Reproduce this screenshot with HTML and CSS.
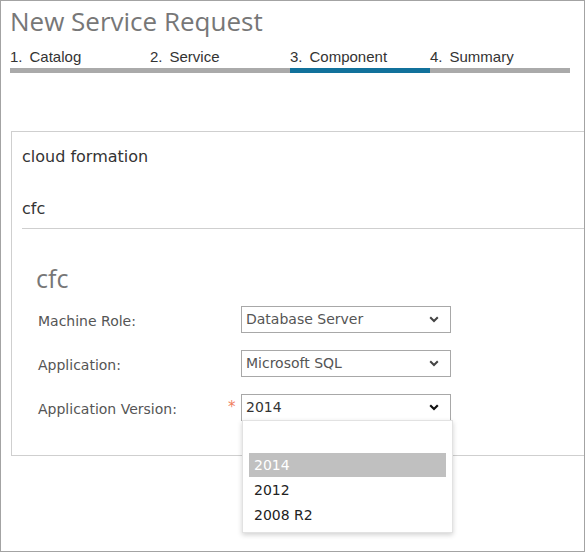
FILE: index.html
```html
<!DOCTYPE html>
<html>
<head>
<meta charset="utf-8">
<link rel="stylesheet" href="styles.css">
</head>
<body>
<div class="frame">
  <h1 class="title">New Service Request</h1>
  <div class="steps">
    <div class="step"><span class="num">1.</span>Catalog</div>
    <div class="step"><span class="num">2.</span>Service</div>
    <div class="step active"><span class="num">3.</span>Component</div>
    <div class="step"><span class="num">4.</span>Summary</div>
  </div>
  <div class="panel">
    <div class="panel-head">
      <div class="head-line">cloud formation</div>
      <div class="head-line second">cfc</div>
    </div>
    <div class="form">
      <h2 class="form-title">cfc</h2>
      <div class="row">
        <div class="label">Machine Role:</div>
        <div class="req"></div>
        <div class="select"><span class="val">Database Server</span><svg class="chev" width="10" height="7" viewBox="0 0 10 7"><polyline points="1.2,1.2 5,5 8.8,1.2" fill="none" stroke="#444" stroke-width="2"/></svg></div>
      </div>
      <div class="row">
        <div class="label">Application:</div>
        <div class="req"></div>
        <div class="select"><span class="val">Microsoft SQL</span><svg class="chev" width="10" height="7" viewBox="0 0 10 7"><polyline points="1.2,1.2 5,5 8.8,1.2" fill="none" stroke="#444" stroke-width="2"/></svg></div>
      </div>
      <div class="row">
        <div class="label">Application Version:</div>
        <div class="req">*</div>
        <div class="select open"><span class="val dark">2014</span><svg class="chev" width="10" height="7" viewBox="0 0 10 7"><polyline points="1.2,1.2 5,5 8.8,1.2" fill="none" stroke="#111" stroke-width="2.2"/></svg>
          <div class="menu">
            <div class="menu-spacer"></div>
            <div class="item selected">2014</div>
            <div class="item">2012</div>
            <div class="item">2008 R2</div>
          </div>
        </div>
      </div>
    </div>
  </div>
</div>
</body>
</html>
```
FILE: styles.css
```css
html, body {
  margin: 0;
  padding: 0;
  background: #fff;
}
.frame {
  width: 585px;
  height: 552px;
  box-sizing: border-box;
  border: 1px solid #a3a3a3;
  overflow: hidden;
  position: relative;
  padding-left: 9px;
}
.title {
  margin: 0;
  padding-top: 3px;
  font-family: "Open Sans", sans-serif;
  font-weight: 400;
  font-size: 26px;
  line-height: 34px;
  color: #777;
}
.steps {
  display: flex;
  margin-top: 10px;
}
.step {
  width: 140px;
  font-family: "Liberation Sans", Arial, sans-serif;
  font-size: 15px;
  line-height: 18px;
  color: #333;
  padding-bottom: 2px;
  border-bottom: 5px solid #aaa;
}
.step.active {
  border-bottom-color: #11719b;
}
.num {
  margin-right: 7px;
}
.panel {
  margin-top: 58px;
  margin-left: 1px;
  width: 640px;
  border: 1px solid #cfcfcf;
  padding: 13px 0 0 10px;
  height: 325px;
  box-sizing: border-box;
}
.panel-head {
  border-bottom: 1px solid #cfcfcf;
  padding-bottom: 7px;
  font-family: "DejaVu Sans", Verdana, sans-serif;
  font-size: 16px;
  line-height: 24px;
  color: #333;
}
.head-line.second {
  margin-top: 28px;
}
.form {
  padding-left: 14px;
}
.form-title {
  margin: 32px 0 11px 0;
  font-family: "Open Sans", sans-serif;
  font-weight: 400;
  font-size: 25px;
  line-height: 34px;
  color: #777;
}
.row {
  display: flex;
  height: 27px;
  margin-bottom: 17px;
  font-family: "DejaVu Sans", Verdana, sans-serif;
  font-size: 14px;
}
.label {
  width: 190px;
  padding-left: 2px;
  padding-top: 2px;
  line-height: 27px;
  color: #555;
}
.req {
  width: 13px;
  color: #f0805f;
  line-height: 27px;
  font-size: 15px;
}
.select {
  position: relative;
  width: 210px;
  height: 27px;
  box-sizing: border-box;
  border: 1px solid #a8a8a8;
  display: flex;
  align-items: center;
  justify-content: space-between;
  padding: 0 11px 1px 4px;
  color: #555;
}
.val.dark {
  color: #333;
}
.chev {
  margin-top: 1px;
}
.menu {
  position: absolute;
  left: 0;
  top: 25px;
  width: 211px;
  height: 113px;
  box-sizing: border-box;
  background: #fff;
  border: 1px solid #e2e2e2;
  box-shadow: 0 2px 5px rgba(0, 0, 0, 0.18);
  padding: 0 6px;
  z-index: 2;
}
.menu-spacer {
  height: 32px;
}
.item {
  height: 25px;
  line-height: 25px;
  padding-left: 5px;
  color: #222;
}
.item.selected {
  height: 24px;
  line-height: 24px;
  background: #c0c0c0;
  color: #fff;
  margin-bottom: 1px;
}
```
